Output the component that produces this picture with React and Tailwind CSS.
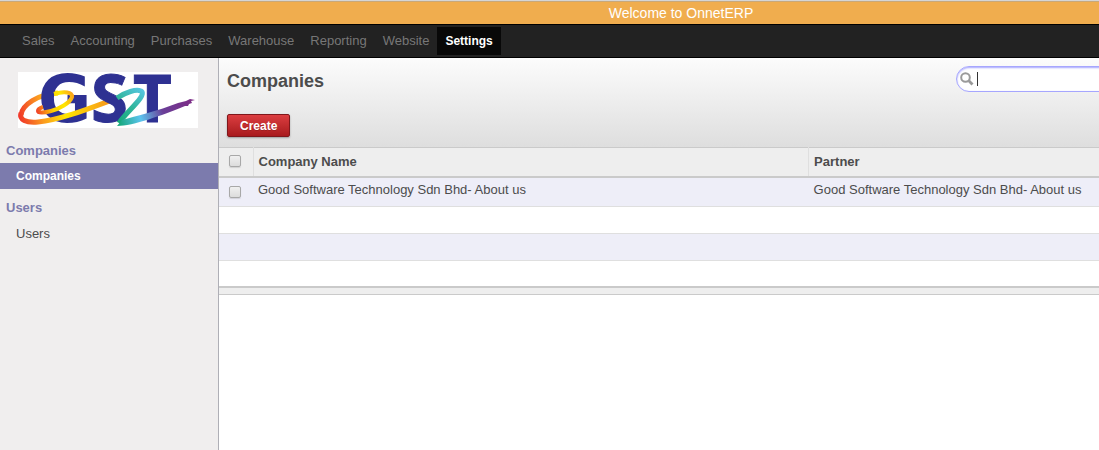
import React from 'react'

const menu = ['Sales', 'Accounting', 'Purchases', 'Warehouse', 'Reporting', 'Website', 'Settings']
const rows = [{ name: 'Good Software Technology Sdn Bhd- About us', partner: 'Good Software Technology Sdn Bhd- About us' }]

function Logo() {
  return (
    <svg viewBox="0 0 180 56" className="block w-full overflow-visible bg-white" role="img" aria-label="GST">
      <defs>
        <linearGradient id="fire" gradientUnits="userSpaceOnUse" x1="0" y1="45" x2="92" y2="25">
          <stop offset="0" stopColor="#f0322a" />
          <stop offset="0.25" stopColor="#fb9a20" />
          <stop offset="0.5" stopColor="#ffe600" />
          <stop offset="1" stopColor="#f7941d" />
        </linearGradient>
        <linearGradient id="loop" gradientUnits="userSpaceOnUse" x1="18" y1="38" x2="56" y2="24">
          <stop offset="0" stopColor="#f0402a" />
          <stop offset="0.4" stopColor="#fed000" />
          <stop offset="0.7" stopColor="#ffe600" />
          <stop offset="1" stopColor="#f9a01d" />
        </linearGradient>
        <linearGradient id="sea" gradientUnits="userSpaceOnUse" x1="126" y1="16" x2="100" y2="54">
          <stop offset="0" stopColor="#5ac8e8" />
          <stop offset="0.5" stopColor="#2fb59a" />
          <stop offset="1" stopColor="#12a676" />
        </linearGradient>
        <linearGradient id="tail" gradientUnits="userSpaceOnUse" x1="100" y1="53" x2="174" y2="28">
          <stop offset="0" stopColor="#12a676" />
          <stop offset="0.3" stopColor="#5cc4ee" />
          <stop offset="0.6" stopColor="#6a3f98" />
          <stop offset="1" stopColor="#7d2c86" />
        </linearGradient>
      </defs>
      <path d="M3 43C4 33 20 22 40 21" fill="none" stroke="url(#fire)" strokeWidth="5" />
      <text x="20" y="50" fill="#2e3192" fontSize="65" fontWeight="700" className="font-['DejaVu_Sans',sans-serif]">G</text>
      <path d="M36 22C46 19 55 20 54 25C52 31 41 37 33 39C26 41 20 41 20 39C20 37 22 36 25 35" fill="none" stroke="url(#loop)" strokeWidth="4" />
      <path d="M3 41C1 48 8 51 20 50C42 48 70 37 94 28" fill="none" stroke="url(#fire)" strokeWidth="5" />
      <text x="73 115" y="50" fill="#2e3192" stroke="#2e3192" strokeWidth="1" fontSize="67" fontWeight="700" className="font-['Open_Sans',sans-serif]">ST</text>
      <path d="M99 26C108 20 118 17 123 19C130 23 108 40 101 51" fill="none" stroke="url(#sea)" strokeWidth="5" strokeLinejoin="round" />
      <path d="M99 54C115 54 145 43 167 34L170 34L171 32L174 31L173 29L177 28L172 27L168 29L164 30L160 31C140 39 118 44 104 48Z" fill="url(#tail)" />
    </svg>
  )
}

function Checkbox({ label }) {
  return (
    <input
      type="checkbox"
      aria-label={label}
      className="block size-3 appearance-none rounded-xs border border-[#a8a8a8] bg-linear-to-b from-[#f0f0f0] to-[#dcdcdc] shadow-[0_1px_1px_rgba(0,0,0,0.12)]"
    />
  )
}

function Sidebar() {
  return (
    <aside className="w-[219px] shrink-0 border-r border-[#afafb6] bg-[#f0eeee] text-[13px] leading-[18px]">
      <div className="pt-3.5 pr-5 pb-3.5 pl-[18px]">
        <Logo />
      </div>
      <h2 className="px-1.5 font-bold text-[#7c7bad]">Companies</h2>
      <a href="#companies" className="mt-[3px] block bg-[#7c7bad] px-4 py-1 text-xs leading-[18px] font-bold text-white">Companies</a>
      <h2 className="mt-2.5 px-1.5 font-bold text-[#7c7bad]">Users</h2>
      <a href="#users" className="mt-1 block px-4 py-1 text-[#4c4c4c]">Users</a>
    </aside>
  )
}

function Toolbar() {
  return (
    <div className="flex h-[89px] justify-between bg-linear-to-b from-[#fcfcfc] to-[#dedede]">
      <div className="flex flex-col items-start pt-3 pl-2">
        <h1 className="text-lg leading-[22px] font-bold text-[#4c4c4c]">Companies</h1>
        <button className="mt-[22px] h-[23px] rounded-xs border border-[#80171b] bg-linear-to-b from-[#dc3d40] to-[#a81a1d] px-3 text-xs font-bold text-white shadow-[0_1px_2px_rgba(0,0,0,0.3)] text-shadow-2xs">
          Create
        </button>
      </div>
      <label className="mt-2 -mr-2 flex h-[26px] w-[151px] items-center rounded-l-full border border-[#a6a6fe] bg-white pl-[3px] shadow-[inset_0_1px_2px_#a6a6fe]">
        <svg viewBox="0 0 14 14" className="size-3.5 shrink-0" fill="none" stroke="#9a9a9a">
          <circle cx="5.5" cy="5.5" r="4.3" strokeWidth="2" />
          <path d="M8.8 8.8L12.5 12.5" strokeWidth="2.8" />
        </svg>
        <span className="ml-[3px] h-3.5 w-px bg-[#333]" />
        <input type="text" aria-label="Search" className="min-w-0 flex-1 bg-transparent text-[13px] outline-none" />
      </label>
    </div>
  )
}

function CompanyTable() {
  return (
    <table className="w-full table-fixed border-collapse text-left text-[13px] text-[#4c4c4c]">
      <colgroup>
        <col className="w-[34px]" />
        <col />
        <col className="w-[33%]" />
      </colgroup>
      <thead>
        <tr className="h-[29px] border-t border-b-2 border-[#cacaca] bg-[#eeeeee]">
          <th className="border-r border-[#dfdfdf] pb-0.5 pl-2.5"><Checkbox label="Select all" /></th>
          <th className="border-r border-[#dfdfdf] px-[5px]">Company Name</th>
          <th className="px-[5px]">Partner</th>
        </tr>
      </thead>
      <tbody>
        {rows.map((row) => (
          <tr key={row.name} className="h-[30px] border-b border-[#dfdfdf] bg-[#eeeef8]">
            <td className="pl-2.5"><Checkbox label={row.name} /></td>
            <td className="px-[5px] pb-1">{row.name}</td>
            <td className="px-[5px] pb-1">{row.partner}</td>
          </tr>
        ))}
        <tr className="h-[27px] border-b border-[#dfdfdf] bg-white"><td colSpan={3} /></tr>
        <tr className="h-[27px] border-b border-[#dfdfdf] bg-[#eeeef8]"><td colSpan={3} /></tr>
        <tr className="h-[26px] bg-white"><td colSpan={3} /></tr>
      </tbody>
      <tfoot>
        <tr className="h-2 border-t-2 border-b border-[#cacaca] bg-[#eeeeee]"><td colSpan={3} /></tr>
      </tfoot>
    </table>
  )
}

export default function App() {
  return (
    <div className="flex min-h-screen flex-col overflow-hidden bg-white font-['Liberation_Sans',Arial,sans-serif]">
      <div className="h-6 border-t border-[#d5d5d5] bg-[#f0ad4e] pl-[263px] text-center text-sm leading-6 text-white shadow-[inset_0_1px_0_#c9a878]">
        Welcome to OnnetERP
      </div>
      <nav className="flex h-[34px] items-center border-y border-black bg-[#222222] pl-3.5 text-[13px] leading-5 text-[#777777]">
        {menu.map((item) => (
          <a
            key={item}
            href={'#' + item.toLowerCase()}
            className={item === 'Settings' ? 'bg-[#080808] px-2 py-1 text-xs leading-5 font-bold text-white' : 'px-2 py-1'}
          >
            {item}
          </a>
        ))}
      </nav>
      <div className="flex flex-1">
        <Sidebar />
        <main className="min-w-0 flex-1 overflow-hidden">
          <Toolbar />
          <CompanyTable />
        </main>
      </div>
    </div>
  )
}
